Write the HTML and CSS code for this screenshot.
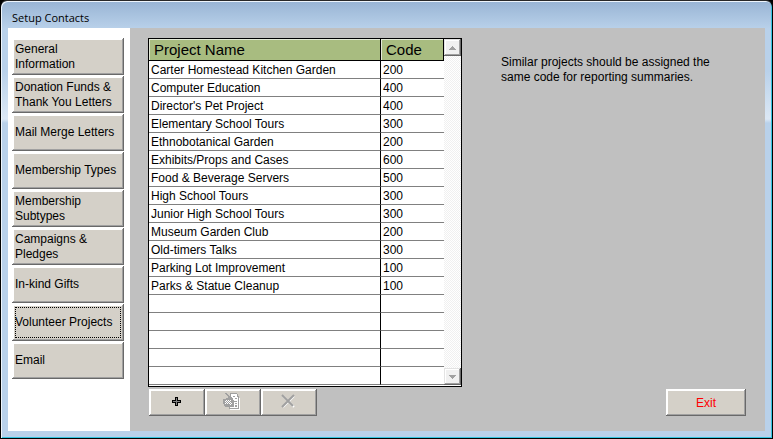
FILE: index.html
```html
<!DOCTYPE html>
<html lang="en">
<head>
  <meta charset="UTF-8">
  <meta name="viewport" content="width=device-width, initial-scale=1.0">
  <title>Setup Contacts</title>
  <link rel="stylesheet" href="styles.css">
</head>
<body>

<div class="window">
  <header class="title-bar">Setup Contacts</header>

  <div class="client">
    <nav class="sidebar">
      <button type="button" class="btn nav-btn">General<br>Information</button>
      <button type="button" class="btn nav-btn">Donation Funds &amp; Thank You Letters</button>
      <button type="button" class="btn nav-btn">Mail Merge Letters</button>
      <button type="button" class="btn nav-btn">Membership Types</button>
      <button type="button" class="btn nav-btn">Membership Subtypes</button>
      <button type="button" class="btn nav-btn">Campaigns &amp; Pledges</button>
      <button type="button" class="btn nav-btn">In-kind Gifts</button>
      <button type="button" class="btn nav-btn selected">Volunteer Projects</button>
      <button type="button" class="btn nav-btn">Email</button>
    </nav>

    <main class="content">
      <div class="main-row">
        <div class="list-box">
          <table class="projects">
            <thead>
              <tr><th class="name">Project Name</th><th class="code">Code</th></tr>
            </thead>
            <tbody>
              <tr><td>Carter Homestead Kitchen Garden</td><td>200</td></tr>
              <tr><td>Computer Education</td><td>400</td></tr>
              <tr><td>Director's Pet Project</td><td>400</td></tr>
              <tr><td>Elementary School Tours</td><td>300</td></tr>
              <tr><td>Ethnobotanical Garden</td><td>200</td></tr>
              <tr><td>Exhibits/Props and Cases</td><td>600</td></tr>
              <tr><td>Food &amp; Beverage Servers</td><td>500</td></tr>
              <tr><td>High School Tours</td><td>300</td></tr>
              <tr><td>Junior High School Tours</td><td>300</td></tr>
              <tr><td>Museum Garden Club</td><td>200</td></tr>
              <tr><td>Old-timers Talks</td><td>300</td></tr>
              <tr><td>Parking Lot Improvement</td><td>100</td></tr>
              <tr><td>Parks &amp; Statue Cleanup</td><td>100</td></tr>
              <tr><td></td><td></td></tr>
              <tr><td></td><td></td></tr>
              <tr><td></td><td></td></tr>
              <tr><td></td><td></td></tr>
              <tr><td></td><td></td></tr>
            </tbody>
          </table>
          <div class="scrollbar">
            <button type="button" class="scroll-btn" aria-label="Scroll up">
              <svg width="7" height="4" viewBox="0 0 7 4" shape-rendering="crispEdges"><path d="M3 0h1v1h1v1h1v1h1v1H0V3h1V2h1V1h1z" fill="#a0a0a0"/></svg>
            </button>
            <button type="button" class="scroll-btn" aria-label="Scroll down">
              <svg width="7" height="4" viewBox="0 0 7 4" shape-rendering="crispEdges"><path d="M0 0h7v1H6v1H5v1H4v1H3V3H2V2H1V1H0z" fill="#a0a0a0"/></svg>
            </button>
          </div>
        </div>
        <p class="hint">Similar projects should be assigned the same code for reporting summaries.</p>
      </div>

      <div class="actions">
        <button type="button" class="btn tool-btn" aria-label="Add project">
          <svg width="9" height="9" viewBox="0 0 9 9" shape-rendering="crispEdges">
            <path d="M3 0h3v3h3v3H6v3H3V6H0V3h3z" fill="#000"/>
            <path d="M4 1h1v3h3v1H5v3H4V5H1V4h3z" fill="#808080"/>
          </svg>
        </button>
        <button type="button" class="btn tool-btn" aria-label="Edit project" disabled>
          <svg width="18" height="18" viewBox="0 0 18 18" shape-rendering="crispEdges">
            <!-- page -->
            <path d="M7 1h7v1h1v1h1v2h1v12H7z" fill="#fff"/>
            <path d="M7 0h7v1H7zM14 1h1v3h-1zM15 3h1v13h-1zM6 15h10v1H6zM6 13h1v3H6z" fill="#a0a0a0"/>
            <path d="M10 3h2v1h-2zM12 5h2v1h-2zM11 8h3v1h-3zM12 10h2v1h-2zM9 13h2v1H9zM12 12h2v2h-2z" fill="#a0a0a0"/>
            <!-- hand with pencil -->
            <path d="M2 0h2v1h1v1h1v1h1V1h1v3h1v1h1v2h1v6H9v1H2v-1H1v-2H0V6h3V5h2V3H4V2H3V1H2z" fill="#a0a0a0"/>
            <path d="M3 7h1v1H3zM5 7h1v1H5zM7 7h1v1H7zM2 8h1v1H2zM4 8h1v1H4zM6 8h1v1H6zM3 9h1v1H3zM5 9h1v1H5zM7 9h1v1H7zM2 10h1v1H2zM4 10h1v1H4zM6 10h1v1H6zM8 10h1v1H8zM7 11h1v1H7z" fill="#fff"/>
          </svg>
        </button>
        <button type="button" class="btn tool-btn" aria-label="Delete project" disabled>
          <svg width="15" height="15" viewBox="0 0 15 15">
            <path d="M2 2l11 11M13 2L2 13" fill="none" stroke="#fff" stroke-width="2"/>
            <path d="M1 1l11 11M13 1L1 13" fill="none" stroke="#a0a0a0" stroke-width="2"/>
          </svg>
        </button>
        <button type="button" class="btn exit-btn">Exit</button>
      </div>
    </main>
  </div>
</div>

</body>
</html>
```

FILE: styles.css
```css
* {
  box-sizing: border-box;
}

body {
  margin: 0;
  background: #000;
  font-family: "Liberation Sans", Arial, sans-serif;
  font-size: 12px;
  color: #000;
}

.window {
  display: flex;
  flex-direction: column;
  min-height: 100vh;
  padding: 0 6px 6px;
  border: 1px solid #000;
  border-top-color: #282828;
  border-radius: 7px 7px 0 0;
  background: linear-gradient(#98b4d4, #b9d1ea 28px, #b9d1ea 70px, #dce8f5 118px, #b9d1ea 122px);
  box-shadow: inset 1px 1px 0 #eef5fc, inset -1px -1px 0 #35c4e0;
}

.title-bar {
  height: 27px;
  padding: 1px 5px 0;
  line-height: 32px;
  font-family: "Open Sans", "Noto Sans", sans-serif;
  font-size: 11px;
}

.client {
  flex: 1;
  display: flex;
  margin: 0 1px 1px;
  background: #c0c0c0;
}

.sidebar {
  display: flex;
  flex-direction: column;
  gap: 1px;
  width: 122px;
  padding: 10px 6px 10px 4px;
  background: #fff;
}

.btn {
  border: 0;
  background: #d4d0c8;
  box-shadow: inset -1px -1px 0 #696969, inset 1px 1px 0 #fff, inset -2px -2px 0 #a0a0a0, inset 2px 2px 0 #fff;
  color: #000;
  font: inherit;
}

.nav-btn {
  height: 37px;
  padding: 0 2px 0 3px;
  line-height: 15px;
  text-align: left;
}

.selected {
  outline: 1px dotted #000;
  outline-offset: -4px;
}

.content {
  flex: 1;
  padding: 10px 19px 15px 18px;
}

.main-row {
  display: flex;
  align-items: flex-start;
  gap: 39px;
}

.list-box {
  display: flex;
  width: 314px;
  padding-bottom: 1px;
  border: 1px solid #000;
  background: #fff;
}

.projects {
  flex: 1;
  table-layout: fixed;
  border-collapse: separate;
  border-spacing: 0;
}

.projects th {
  height: 22px;
  padding: 0 5px;
  border-right: 1px solid #000;
  border-bottom: 1px solid #000;
  background: #a8bc80;
  box-shadow: inset 1px 1px 0 #e4ead8;
  font-size: 15px;
  font-weight: normal;
  line-height: 21px;
  text-align: left;
}

.name {
  width: 232px;
}

.projects td {
  height: 18px;
  padding: 2px 2px 0;
  border-bottom: 1px solid #808080;
  line-height: 15px;
  white-space: nowrap;
}

.projects td:first-child {
  border-right: 1px solid #000;
}

.scrollbar {
  display: flex;
  flex-direction: column;
  justify-content: space-between;
  width: 17px;
  background: repeating-conic-gradient(#f0f0f0 0 25%, #fff 0 50%) 0 0 / 2px 2px;
}

.scroll-btn {
  display: flex;
  align-items: center;
  justify-content: center;
  height: 17px;
  padding: 0;
  border: 0;
  background: #f0f0f0;
  box-shadow: inset -1px -1px 0 #696969, inset 1px 1px 0 #e3e3e3, inset -2px -2px 0 #a0a0a0, inset 2px 2px 0 #fff;
}

.hint {
  flex: 1;
  max-width: 230px;
  margin: 17px 0 0;
  line-height: 15px;
}

.actions {
  display: flex;
  margin: 2px 0 0 1px;
}

.tool-btn {
  display: flex;
  align-items: center;
  justify-content: center;
  width: 56px;
  height: 27px;
  padding: 0 2px 2px 0;
}

.exit-btn {
  width: 80px;
  height: 27px;
  margin-left: auto;
  color: #f00;
}
```
